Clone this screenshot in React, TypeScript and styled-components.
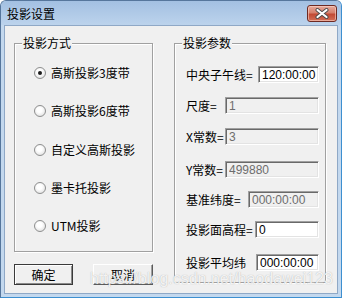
import React from "react";
import styled, { createGlobalStyle } from "styled-components";

const Global = createGlobalStyle`
  html, body { margin: 0; padding: 0; background: #ffffff; }
  body { font-family: "Noto Sans CJK SC", "Liberation Sans", sans-serif; font-size: 12px; }
`;

const Window = styled.div`
  position: relative;
  width: 342px;
  height: 298px;
  box-sizing: border-box;
  border: 1px solid #56769c;
  border-right-color: #3d8fd0;
  border-bottom-color: #3d8fd0;
  border-radius: 6px 6px 0 0;
  background: #c3d8ee;
  display: flex;
  flex-direction: column;
  overflow: hidden;
`;

const TitleBar = styled.div`
  height: 24px;
  flex: none;
  box-sizing: border-box;
  display: flex;
  align-items: flex-start;
  justify-content: space-between;
  padding: 4px 4px 0 6px;
  background: linear-gradient(#a3c0e2, #bcd3ec);
`;

const TitleText = styled.span`
  font-size: 12px;
  line-height: 18px;
  color: #000000;
`;

const CloseButton = styled.div`
  width: 30px;
  height: 17px;
  box-sizing: border-box;
  border: 1px solid #6e2a22;
  border-radius: 3px;
  background: linear-gradient(#e6aa9c 0%, #d6806c 45%, #c24a34 55%, #d36f57 100%);
  box-shadow: inset 0 0 0 1px rgba(255, 220, 210, 0.55);
  display: flex;
  align-items: center;
  justify-content: center;
`;

const Client = styled.div`
  flex: 1;
  margin: 0 3px 3px 3px;
  border: 1px solid #8fa8c6;
  background: #f0f0f0;
  display: flex;
  padding: 10px 0 0 9px;
`;

const LeftCol = styled.div`
  width: 139px;
  display: flex;
  flex-direction: column;
`;

const RightCol = styled.div`
  width: 152px;
  margin-left: 21px;
`;

const GroupBox = styled.fieldset<{ $height: number }>`
  margin: 0;
  padding: 0;
  min-width: 0;
  box-sizing: border-box;
  height: ${(p) => p.$height}px;
  border: 1px solid #a0a0a0;
  box-shadow: inset 1px 1px 0 #ffffff, 1px 1px 0 #ffffff;
`;

const Legend = styled.legend`
  margin-left: 7px;
  padding: 0 1px;
  font-size: 12px;
  line-height: 14px;
  color: #000000;
  background: #f0f0f0;
`;

const RadioList = styled.div`
  display: flex;
  flex-direction: column;
  gap: 22.33px;
  padding: 15px 0 0 19px;
`;

const RadioRow = styled.label`
  display: flex;
  align-items: center;
  gap: 5px;
  height: 16px;
  font-size: 12px;
  line-height: 16px;
  color: #000000;
`;

const RadioDot = styled.span<{ $checked: boolean }>`
  width: 12px;
  height: 12px;
  box-sizing: border-box;
  border-radius: 50%;
  border: 1px solid #8e8f8f;
  background: radial-gradient(circle at 45% 40%, #ffffff 30%, #d6d6d6 100%);
  display: inline-flex;
  align-items: center;
  justify-content: center;
  flex: none;
  &::after {
    content: "";
    width: 4px;
    height: 4px;
    border-radius: 50%;
    background: #1b1b1b;
    display: ${(p) => (p.$checked ? "block" : "none")};
  }
`;

const ButtonRow = styled.div`
  display: flex;
  justify-content: space-between;
  margin-top: 12px;
`;

const Button = styled.button<{ $width: number; $default?: boolean }>`
  width: ${(p) => p.$width}px;
  height: 21px;
  box-sizing: border-box;
  padding: 0;
  font-family: "Noto Sans CJK SC", sans-serif;
  font-size: 12px;
  line-height: 16px;
  color: #000000;
  background: #f0f0f0;
  border: 1px solid;
  border-color: ${(p) =>
    p.$default ? "#3a3a3a" : "#ffffff #5a5a5a #5a5a5a #ffffff"};
  box-shadow: ${(p) =>
    p.$default
      ? "inset 1px 1px 0 #ffffff, inset -1px -1px 0 #8a8a8a"
      : "inset -1px -1px 0 #a0a0a0"};
`;

const ParamList = styled.div`
  display: flex;
  flex-direction: column;
  padding: 0 6px 0 11px;
`;

const ParamRow = styled.div<{ $gap: number }>`
  display: flex;
  align-items: center;
  justify-content: space-between;
  height: 17px;
  margin-top: ${(p) => p.$gap}px;
`;

const ParamLabel = styled.span`
  font-size: 12px;
  line-height: 16px;
  color: #000000;
  white-space: nowrap;
`;

const Field = styled.input<{ $width: number }>`
  width: ${(p) => p.$width}px;
  height: 17px;
  box-sizing: border-box;
  margin: 0;
  padding: 0 0 0 3px;
  font-family: "Liberation Sans", Arial, sans-serif;
  font-size: 12px;
  color: #000000;
  background: #ffffff;
  border: 1px solid;
  border-color: #a0a0a0 #ffffff #ffffff #a0a0a0;
  box-shadow: inset 1px 1px 0 #696969, inset -1px -1px 0 #e3e3e3;
  outline: none;
  &:disabled {
    background: #f0f0f0;
    color: #6d6d6d;
  }
`;

const Watermark = styled.div`
  position: absolute;
  left: 89px;
  top: 270px;
  font-family: "Liberation Sans", Arial, sans-serif;
  font-size: 16px;
  line-height: 16px;
  color: rgba(255, 255, 255, 0.85);
  text-shadow: 0 0 1px rgba(140, 140, 140, 0.7);
  pointer-events: none;
  white-space: nowrap;
`;

const radios = [
  { label: "高斯投影3度带", checked: true },
  { label: "高斯投影6度带", checked: false },
  { label: "自定义高斯投影", checked: false },
  { label: "墨卡托投影", checked: false },
  { label: "UTM投影", checked: false },
];

const params = [
  { label: "中央子午线=", value: "120:00:00", width: 61, disabled: false, gap: 16 },
  { label: "尺度=", value: "1", width: 94, disabled: true, gap: 14 },
  { label: "X常数=", value: "3", width: 94, disabled: true, gap: 14 },
  { label: "Y常数=", value: "499880", width: 94, disabled: true, gap: 16 },
  { label: "基准纬度=", value: "000:00:00", width: 71, disabled: true, gap: 13 },
  { label: "投影面高程=", value: "0", width: 64, disabled: false, gap: 13 },
  { label: "投影平均纬", value: "000:00:00", width: 63, disabled: false, gap: 16 },
];

export default function App() {
  return (
    <>
      <Global />
      <Window>
        <TitleBar>
          <TitleText>投影设置</TitleText>
          <CloseButton>
            <svg width="14" height="11" viewBox="0 0 14 11">
              <path d="M2.5 2 L11.5 9 M11.5 2 L2.5 9" stroke="#4a4a4a" strokeWidth="4" strokeLinecap="round" />
              <path d="M2.5 2 L11.5 9 M11.5 2 L2.5 9" stroke="#ffffff" strokeWidth="2.2" strokeLinecap="round" />
            </svg>
          </CloseButton>
        </TitleBar>
        <Client>
          <LeftCol>
            <GroupBox $height={216}>
              <Legend>投影方式</Legend>
              <RadioList>
                {radios.map((r) => (
                  <RadioRow key={r.label}>
                    <RadioDot $checked={r.checked} />
                    {r.label}
                  </RadioRow>
                ))}
              </RadioList>
            </GroupBox>
            <ButtonRow>
              <Button $width={59} $default>确定</Button>
              <Button $width={60}>取消</Button>
            </ButtonRow>
          </LeftCol>
          <RightCol>
            <GroupBox $height={247}>
              <Legend>投影参数</Legend>
              <ParamList>
                {params.map((p) => (
                  <ParamRow key={p.label} $gap={p.gap}>
                    <ParamLabel>{p.label}</ParamLabel>
                    <Field $width={p.width} value={p.value} disabled={p.disabled} readOnly />
                  </ParamRow>
                ))}
              </ParamList>
            </GroupBox>
          </RightCol>
        </Client>
        <Watermark>https://blog.csdn.net/haodawei123</Watermark>
      </Window>
    </>
  );
}
